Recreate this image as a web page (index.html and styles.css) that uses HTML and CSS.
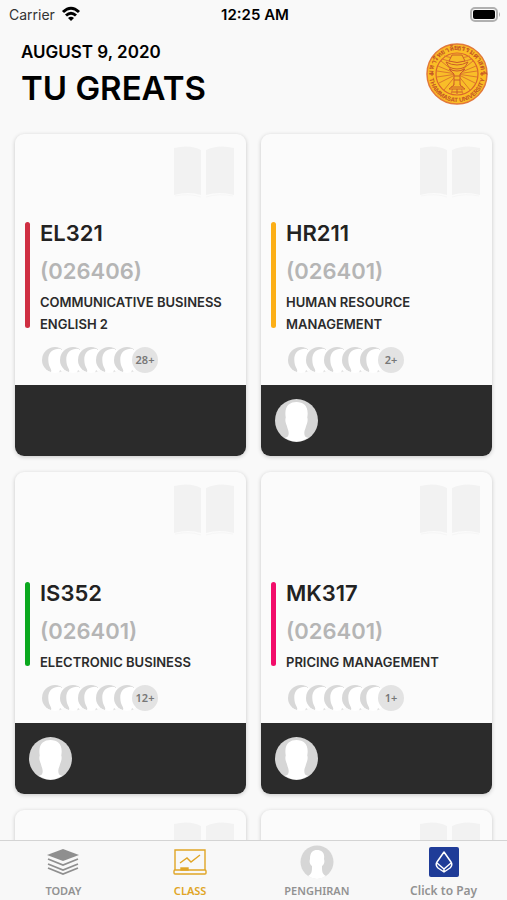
FILE: index.html
```html
<!DOCTYPE html>
<html lang="en">
<head>
    <meta charset="UTF-8">
    <meta name="viewport" content="width=device-width, initial-scale=1.0">
    <title>TU Greats</title>
    <link rel="stylesheet" href="styles.css">
</head>
<body>
    <!-- Shared shapes -->
    <svg class="defs" aria-hidden="true">
        <symbol id="book" viewBox="0 0 62 52">
            <path d="M1 2 Q17 -2 28 4 V49 Q16 45 1 49 Z M33 4 Q45 -2 61 2 V49 Q46 45 33 49 Z"/>
            <path d="M2 50 Q16 47 28 51 M33 51 Q46 47 60 50" fill="none" stroke="#f6f6f6"/>
        </symbol>
        <symbol id="person" viewBox="0 0 44 44">
            <circle cx="22" cy="22" r="22" fill="#d6d6d6"/>
            <path d="M11 19 C9 7 15 3 22 3 C30 3 35 8 33 19 C34 21 33 25 32 27 C31 31 30 32 30 35 C30 38 31 39 34 40 Q22 47 10 40 C13 39 14 38 14 35 C14 32 13 31 12 27 C11 25 10 22 11 19 Z" fill="#fff"/>
        </symbol>
        <!-- Softer head with one lock of hair, for the member stack -->
        <symbol id="member" viewBox="0 0 26 26">
            <circle cx="13" cy="13" r="13" fill="#fff"/>
            <path d="M20 2 A13 13 0 1 0 9 25 C10 23 8 21 7 18 C5 10 7 3 15 2 Q18 1 20 3 Z" fill="#d8d8d8"/>
            <path d="M18 23 L21 25 L17 26 Z" fill="#dedede"/>
        </symbol>
    </svg>

    <div class="status">
        <div class="carrier">
            <span>Carrier</span>
            <svg width="20" height="16" viewBox="0 0 20 16" fill="none" stroke="#000" stroke-width="3">
                <path d="M2 6 Q10 -1.500 18 6"/>
                <path d="M5 9.500 Q10 5 15 9.500"/>
                <path d="M10 15 L7 12 Q10 9.500 13 12 Z" fill="#000" stroke="none"/>
            </svg>
        </div>
        <div class="time">12:25 AM</div>
        <svg class="battery" width="31" height="15" viewBox="0 0 31 15">
            <rect x="1" y="1" width="26" height="13" rx="4" fill="#f9f9f9" stroke="#b0b0b0" stroke-width="2"/>
            <rect x="3" y="3" width="22" height="9" rx="2" fill="#000"/>
            <path d="M29 5 Q31 7.500 29 10 Z" fill="#a9a9a9"/>
        </svg>
    </div>

    <header class="header">
        <div>
            <div class="date">AUGUST 9, 2020</div>
            <h1>TU GREATS</h1>
        </div>
        <svg class="seal" viewBox="0 0 62 62">
            <circle cx="31" cy="31" r="30" fill="#fbbd25" stroke="#e2793a" stroke-width="1.500"/>
            <circle cx="31" cy="31" r="21" fill="#f9bd28" stroke="#d9642d" stroke-width="1.200"/>
            <g stroke="#dc7a2b" stroke-width="1" fill="none">
                <path d="M31 31 L12 23 M31 31 L11 28 M31 31 L11 34 M31 31 L13 40 M31 31 L18 47 M31 31 L15 18 M31 31 L50 23 M31 31 L51 28 M31 31 L51 34 M31 31 L49 40 M31 31 L44 47 M31 31 L47 18 M31 31 L25 51 M31 31 L37 51"/>
                <path d="M16 16 Q31 22 46 16 M18 13 Q31 17 44 13"/>
            </g>
            <g fill="#f7bb28" stroke="#cc5c28" stroke-width="1">
                <path d="M20 19 Q31 25 42 19 L39 24 Q31 28 23 24 Z"/>
                <path d="M26 12 H36 L39 18 Q31 21 23 18 Z"/>
                <path d="M23 26 L28 31 V42 L23 46 H39 L34 42 V31 L39 26 Q31 30 23 26 Z"/>
                <path d="M28 33 H34 M28 37 H34 M25 44 H37 M31 46 V51 M26 49 H36"/>
            </g>
            <path d="M4 31 H8 M6 29 V33 M54 31 H58 M56 29 V33" stroke="#c55726"/>
            <path id="arcTop" d="M7 31 A24 24 0 0 1 55 31" fill="none"/>
            <path id="arcBottom" d="M3 31 A28 28 0 0 0 59 31" fill="none"/>
            <text class="seal-thai"><textPath href="#arcTop" startOffset="50%">มหาวิทยาลัยธรรมศาสตร์</textPath></text>
            <text class="seal-text"><textPath href="#arcBottom" startOffset="50%">THAMMASAT UNIVERSITY</textPath></text>
        </svg>
    </header>

    <main class="classes">
        <article class="card">
            <svg class="book"><use href="#book"/></svg>
            <div class="info red">
                <div>
                    <h2>EL321</h2>
                    <div class="section">(026406)</div>
                    <p>COMMUNICATIVE BUSINESS ENGLISH 2</p>
                </div>
            </div>
            <div class="members">
                <svg><use href="#member"/></svg>
                <svg><use href="#member"/></svg>
                <svg><use href="#member"/></svg>
                <svg><use href="#member"/></svg>
                <svg><use href="#member"/></svg>
                <span class="count">28+</span>
            </div>
            <div class="teacher"></div>
        </article>

        <article class="card">
            <svg class="book"><use href="#book"/></svg>
            <div class="info orange">
                <div>
                    <h2>HR211</h2>
                    <div class="section">(026401)</div>
                    <p>HUMAN RESOURCE MANAGEMENT</p>
                </div>
            </div>
            <div class="members">
                <svg><use href="#member"/></svg>
                <svg><use href="#member"/></svg>
                <svg><use href="#member"/></svg>
                <svg><use href="#member"/></svg>
                <svg><use href="#member"/></svg>
                <span class="count">2+</span>
            </div>
            <div class="teacher"><svg><use href="#person"/></svg></div>
        </article>

        <article class="card">
            <svg class="book"><use href="#book"/></svg>
            <div class="info green">
                <div>
                    <h2>IS352</h2>
                    <div class="section">(026401)</div>
                    <p>ELECTRONIC BUSINESS</p>
                </div>
            </div>
            <div class="members">
                <svg><use href="#member"/></svg>
                <svg><use href="#member"/></svg>
                <svg><use href="#member"/></svg>
                <svg><use href="#member"/></svg>
                <svg><use href="#member"/></svg>
                <span class="count">12+</span>
            </div>
            <div class="teacher"><svg><use href="#person"/></svg></div>
        </article>

        <article class="card">
            <svg class="book"><use href="#book"/></svg>
            <div class="info pink">
                <div>
                    <h2>MK317</h2>
                    <div class="section">(026401)</div>
                    <p>PRICING MANAGEMENT</p>
                </div>
            </div>
            <div class="members">
                <svg><use href="#member"/></svg>
                <svg><use href="#member"/></svg>
                <svg><use href="#member"/></svg>
                <svg><use href="#member"/></svg>
                <svg><use href="#member"/></svg>
                <span class="count">1+</span>
            </div>
            <div class="teacher"><svg><use href="#person"/></svg></div>
        </article>

        <article class="card">
            <svg class="book"><use href="#book"/></svg>
        </article>
        <article class="card">
            <svg class="book"><use href="#book"/></svg>
        </article>
    </main>

    <nav class="tabs">
        <a href="#today">
            <svg viewBox="0 0 34 34">
                <path d="M17 4 L33 10 L17 16 L1 10 Z" fill="#8f8f8f"/>
                <path d="M2 14 L17 20 L32 14 M2 19 L17 25 L32 19 M2 23 L17 29 L32 23" fill="none" stroke="#8f8f8f" stroke-width="1.800"/>
            </svg>
            <span>TODAY</span>
        </a>
        <a href="#class" class="active">
            <svg viewBox="0 0 34 34" fill="none" stroke="#e0a526" stroke-width="1.400">
                <path d="M2 25 V5 H32 V25"/>
                <rect x="1" y="25" width="32" height="4" rx="1"/>
                <path d="M7 18 L14 13 L18 17 L27 10"/>
                <rect x="8" y="23" width="7" height="2" fill="#e0a526"/>
            </svg>
            <span>CLASS</span>
        </a>
        <a href="#penghiran">
            <svg viewBox="0 0 34 34">
                <circle cx="17" cy="17" r="16.500" fill="#d6d6d6"/>
                <path d="M10 14 C10 7 13 5 17 5 C22 5 25 8 24 14 C25 17 24 20 22 21 C22 26 22 29 26 31 Q17 37 8 31 C12 29 12 26 12 21 C10 20 9 17 10 14 Z" fill="#fff"/>
            </svg>
            <span>PENGHIRAN</span>
        </a>
        <a href="#pay">
            <svg viewBox="0 0 34 34">
                <rect x="2" y="2" width="30" height="30" rx="2" fill="#1f3c98"/>
                <path d="M17 7 L10 17 Q8 20 11 23 L17 27 L23 23 Q26 20 24 17 Z M10 18 L17 24 L24 18 M17 24 V27" fill="none" stroke="#fff" stroke-width="1.500" stroke-linejoin="round"/>
            </svg>
            <span class="mixed">Click to Pay</span>
        </a>
    </nav>
</body>
</html>
```
FILE: styles.css
```css
* {
    box-sizing: border-box;
}

body {
    margin: 0;
    height: 100vh;
    display: flex;
    flex-direction: column;
    overflow: hidden;
    background-color: #f9f9f9;
    font-family: Inter, "Noto Sans", sans-serif;
    color: #000;
}

h1, h2, p {
    margin: 0;
}

.defs {
    display: none;
}

/* Status bar */
.status {
    display: grid;
    grid-template-columns: 1fr auto 1fr;
    align-items: center;
    height: 28px;
    padding: 0 6px 0 9px;
    font-size: 14px;
    flex-shrink: 0;
}

.carrier {
    display: flex;
    align-items: center;
    gap: 6px;
    color: #333;
}

.time {
    font-size: 15px;
    font-weight: 600;
}

.battery {
    justify-self: end;
}

/* Title row */
.header {
    display: flex;
    justify-content: space-between;
    align-items: center;
    padding: 12px 19px 17px 21px;
    flex-shrink: 0;
}

.date {
    font-size: 17px;
    line-height: 24px;
    font-weight: 600;
}

h1 {
    font-size: 33px;
    line-height: 48px;
    font-weight: 600;
}

.seal {
    width: 62px;
    height: 62px;
    margin-bottom: 4px;
}

.seal-thai, .seal-text {
    text-anchor: middle;
    fill: #c55726;
    font-weight: 700;
}

.seal-thai {
    font-size: 7px;
}

.seal-text {
    font-size: 6px;
}

/* Cards */
.classes {
    flex: 1;
    min-height: 0;
    display: grid;
    grid-template-columns: 1fr 1fr;
    grid-auto-rows: 322px;
    gap: 16px 15px;
    padding: 5px 15px 15px;
    overflow-y: auto;
    scrollbar-width: none;
}

.card {
    position: relative;
    display: flex;
    flex-direction: column;
    justify-content: flex-end;
    background: #fbfbfb;
    border-radius: 9px;
    box-shadow: 0 1px 4px rgba(0, 0, 0, .2);
    overflow: hidden;
}

.book {
    position: absolute;
    top: 12px;
    right: 11px;
    width: 62px;
    height: 52px;
    fill: #f2f2f2;
}

.info {
    display: flex;
    gap: 10px;
    padding: 0 10px;
}

.info::before {
    content: "";
    width: 5px;
    flex-shrink: 0;
    margin-bottom: 7px;
    border-radius: 3px;
}

.red::before {
    background: #cf2f42;
}

.orange::before {
    background: #fcaf17;
}

.green::before {
    background: #0aa81e;
}

.pink::before {
    background: #f20d6a;
}

h2, .section {
    font-size: 22px;
    line-height: 22px;
    font-weight: 600;
}

h2 {
    color: #222;
}

.section {
    margin: 16px 0 9px;
    color: #b5b5b5;
}

.info p {
    font-size: 13px;
    line-height: 22px;
    font-weight: 600;
    color: #2b2b2b;
}

.members {
    display: flex;
    padding: 12px 27px;
}

.members svg, .count {
    width: 26px;
    height: 26px;
    margin-right: -8px;
    border-radius: 50%;
    flex-shrink: 0;
}

.count {
    position: relative;
    background: #e3e3e3;
    color: #777;
    font: 600 11px/26px "Noto Sans", sans-serif;
    text-align: center;
}

.teacher {
    height: 71px;
    padding: 14px;
    background: #2b2b2b;
}

.teacher svg {
    display: block;
    width: 43px;
    height: 43px;
}

/* Bottom tabs */
.tabs {
    display: grid;
    grid-template-columns: repeat(4, 1fr);
    height: 60px;
    padding-top: 4px;
    background: #f8f8f8;
    border-top: 1px solid #d4d4d4;
    flex-shrink: 0;
}

.tabs a {
    display: flex;
    flex-direction: column;
    align-items: center;
    gap: 4px;
    color: #929292;
    font: 600 11px/16px "Noto Sans", sans-serif;
    text-decoration: none;
}

.tabs svg {
    width: 34px;
    height: 34px;
}

.tabs .mixed {
    font-size: 12px;
}

.tabs .active {
    color: #e0a526;
}
```
